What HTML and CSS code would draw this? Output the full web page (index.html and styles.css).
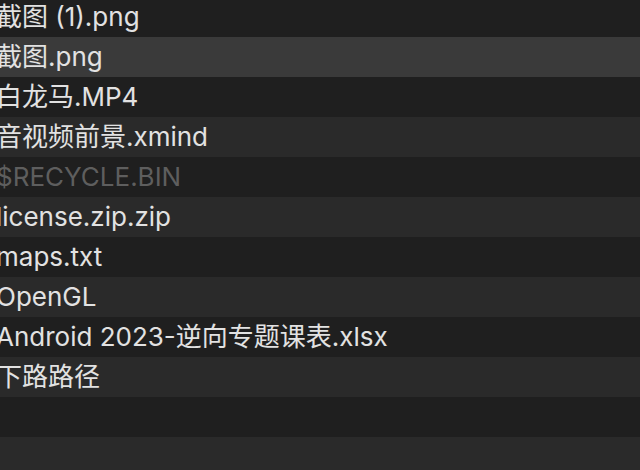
FILE: index.html
```html
<!DOCTYPE html>
<html lang="zh">
<head>
<meta charset="utf-8">
<link rel="stylesheet" href="styles.css">
</head>
<body>
<div class="list">
  <div class="row">截图 (1).png</div>
  <div class="row selected">截图.png</div>
  <div class="row">白龙马.MP4</div>
  <div class="row">音视频前景.xmind</div>
  <div class="row hidden">$RECYCLE.BIN</div>
  <div class="row">license.zip.zip</div>
  <div class="row">maps.txt</div>
  <div class="row">OpenGL</div>
  <div class="row">Android 2023-逆向专题课表.xlsx</div>
  <div class="row">下路路径</div>
  <div class="row"></div>
  <div class="row"></div>
</div>
</body>
</html>
```
FILE: styles.css
```css
html, body {
  margin: 0;
  padding: 0;
  background: #1f1f1f;
  overflow: hidden;
}
.list {
  display: flex;
  flex-direction: column;
  margin-top: -3px;
  width: 640px;
}
.row {
  height: 40px;
  line-height: 40px;
  font-family: "Inter", "Noto Sans CJK SC", sans-serif;
  font-size: 26px;
  color: #e2e2e2;
  white-space: nowrap;
  text-indent: -4px;
  background: #1f1f1f;
}
.row:nth-child(even) {
  background: #2a2a2a;
}
.row.selected {
  background: #3a3a3a;
}
.row.hidden {
  color: #5e5e5e;
}
```
